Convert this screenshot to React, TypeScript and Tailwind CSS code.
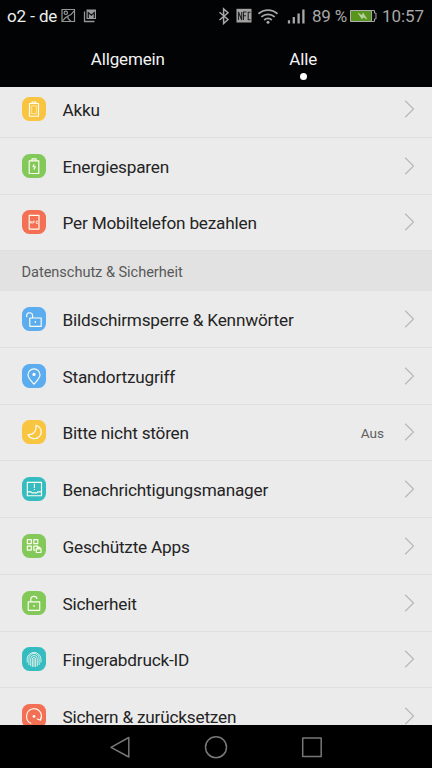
import type { ReactNode } from 'react';

type Item = { label: string; color: string; icon: ReactNode; value?: string };

const general: Item[] = [
  {
    label: 'Akku',
    color: 'bg-[#f9c440]',
    icon: (
      <>
        <path d="M7.500 6.500h9v12.700h-9zM10 6.500V5h4v1.500" />
        <path d="M9.700 8.800h4.600v8H9.700z" strokeWidth=".6" />
      </>
    ),
  },
  {
    label: 'Energiesparen',
    color: 'bg-[#83c95a]',
    icon: (
      <>
        <path d="M7.200 6.800h9.600v12.700H7.200zM10 6.800V4.900h4v1.900" />
        <path d="M12.200 10.300l-1.200 2.400h2.400l-1.500 2.900" />
      </>
    ),
  },
  {
    label: 'Per Mobiltelefon bezahlen',
    color: 'bg-[#f37055]',
    icon: (
      <>
        <path d="M7.200 5.300h9.800v13.800H7.200z" />
        <path d="M8.300 13.400v-2.200l1.600 2.200v-2.200M11.200 13.400v-2.200h1.500M11.200 12.300h1.200M16 11.200h-1.700v2.200H16" strokeWidth=".8" />
      </>
    ),
  },
];

const security: Item[] = [
  {
    label: 'Bildschirmsperre & Kennwörter',
    color: 'bg-[#5badf0]',
    icon: (
      <>
        <path d="M7.800 11h11.400v8.300H7.800zM4.700 10.100C4.200 7.400 5.500 5.700 7.600 5.700c1.700 0 3 1.300 3 3V11" />
        <path d="M13.300 14v2" />
      </>
    ),
  },
  {
    label: 'Standortzugriff',
    color: 'bg-[#5badf0]',
    icon: (
      <>
        <path d="M12 20.200c-2.500-3-6-6.400-6-9.300a6 6 0 0 1 12 0c0 2.900-3.500 6.300-6 9.300z" />
        <circle cx="12" cy="10.400" r="1.600" fill="#fff" stroke="none" />
      </>
    ),
  },
  {
    label: 'Bitte nicht stören',
    color: 'bg-[#f9c440]',
    icon: <path d="M13.800 5.200c5.600 1.600 7 7.500 3.700 11.200-3.500 3.800-9.500 2.800-11.600-1.900 5.200.8 9.100-3.600 7.900-9.300z" />,
    value: 'Aus',
  },
  {
    label: 'Benachrichtigungsmanager',
    color: 'bg-[#35bcc0]',
    icon: (
      <>
        <path d="M5.300 5.300h14.200v13.400H5.300zM5.300 14.900h3.800l.9 .9h4.800l.9-.9h3.800" />
        <path d="M12.400 6.800v4.200M12.400 12v1" />
      </>
    ),
  },
  {
    label: 'Geschützte Apps',
    color: 'bg-[#83c95a]',
    icon: (
      <>
        <path d="M5.300 5.600h4v4h-4zM11.800 5.600h4v4h-4zM5.300 12.100h4v4h-4zM13.500 16.100h-1.700v-4h4v1" />
        <path d="M14.300 14.900h4.700v3.600h-4.700zM15.300 14.900v-1.500h2.700v1.500" />
      </>
    ),
  },
  {
    label: 'Sicherheit',
    color: 'bg-[#83c95a]',
    icon: (
      <>
        <path d="M6.200 10.900h11.500v8.400H6.200zM8.800 10.900V8.400c0-1.900 1.300-3 3.100-3s2.900 1 3.100 2.600" />
        <path d="M12 13.900v2" />
      </>
    ),
  },
  {
    label: 'Fingerabdruck-ID',
    color: 'bg-[#35bcc0]',
    icon: (
      <g strokeWidth=".8">
        <path d="M5.200 15.500v-4a6.900 6.900 0 0 1 13.700 0v4.100" />
        <path d="M6.900 18v-6.400a5.100 5.100 0 0 1 10.200 0V18" />
        <path d="M8.700 19.200v-7.400a3.300 3.300 0 0 1 6.600 0v7.400" />
        <path d="M10.400 19.900v-7.800a1.600 1.600 0 0 1 3.200 0v7.800M12 11.800v8.100" />
      </g>
    ),
  },
  {
    label: 'Sichern & zurücksetzen',
    color: 'bg-[#f37055]',
    icon: (
      <>
        <path d="M9.300 19.500C2.800 17.200 3 7 10 5c6.500-1.800 11.500 4.700 8.300 10.500M19.700 12.500l-1.200 3.700-3.700-1.400" />
        <circle cx="12" cy="12.400" r="1.400" fill="#fff" stroke="none" />
      </>
    ),
  },
];

function Row({ label, color, icon, value }: Item) {
  return (
    <div className="flex h-[56.75px] items-center border-b border-[#dfdfdf] pl-[21.500px] pr-[17px]">
      <div className={`size-6 shrink-0 rounded-[7.500px] ${color}`}>
        <svg viewBox="0 0 24 24" className="size-6 fill-none stroke-[#fffdf2]" strokeWidth="1.150" strokeLinejoin="round">
          {icon}
        </svg>
      </div>
      <span className="ml-[17px] flex-1 whitespace-nowrap pt-[4px] text-[17.200px] tracking-[-0.2px] text-[#242424]">{label}</span>
      {value && <span className="mr-[20px] pt-px text-[13.600px] text-[#606060]">{value}</span>}
      <svg viewBox="0 0 11 18" className="h-[18px] w-[11px] fill-none stroke-[#b8b8b8]" strokeWidth="1.200">
        <path d="M1.200 .8L9.500 9 1.200 17.200" />
      </svg>
    </div>
  );
}

function StatusBar() {
  return (
    <div className="flex h-[31px] items-center pl-[7px] pr-[7px] text-[#a8a8a8]">
      <span className="w-[54px] whitespace-nowrap pt-[3px] text-[17px] tracking-[-0.1px] text-[#efefef]">o2 - de</span>
      <svg className="h-[15px] w-[36px] fill-none stroke-[#969696]" viewBox="0 0 36 15" strokeWidth="1.200">
        <path d="M1 1.500h12.500v12H1zM2 12.500c2-3 3.500-3.500 5-4.500 3-1 4.500-2.500 6-5M7 8.500v2l3 3" />
        <circle cx="4.800" cy="4.800" r="1.700" />
        <path d="M23.500 3.500v10h10" strokeWidth="1.300" />
        <path d="M25.500 1.500h9.500v9.500h-9.500z" fill="#9c9c9c" stroke="none" />
        <path d="M27.300 10V4.500l3 2.700 3-2.700V10" stroke="#151515" />
      </svg>
      <div className="flex-1" />
      <svg className="h-[18px] w-[91px] fill-none stroke-[#a8a8a8]" viewBox="0 0 91 18" strokeWidth="1.500">
        <path d="M1.500 5.200l8.500 7.300-4.400 4V2l4.400 3.800-8.500 7.200" />
        <path d="M18.500 1.800h15v13.700h-15z" fill="#a2a2a2" stroke="none" />
        <path d="M20.500 13V5l3.200 8V5M25.500 13V5h3M25.500 8.800h2.500M32.500 5.300h-2.300v7.400h2.300" stroke="#222" strokeWidth="1.100" />
        <path d="M40.500 6.800c5.500-4.800 13.500-4.800 19 0M43.300 9.900c4-3.400 9.400-3.400 13.400 0M46.200 13c2.400-2 5.200-2 7.600 0" strokeWidth="1.800" />
        <circle cx="50" cy="15.300" r="1.500" fill="#a8a8a8" stroke="none" />
        <path d="M71 16.500v-3.200M75.800 16.500V10M80.600 16.500V6.500M85.400 16.500v-14" strokeWidth="2.300" />
      </svg>
      <span className="ml-[3px] w-[37px] whitespace-nowrap pt-[3px] text-[17px] tracking-[-0.2px]">89 %</span>
      <svg className="h-[14px] w-[28px]" viewBox="0 0 28 14">
        <path d="M1.500 1.500h21v11h-21z" fill="#58951c" stroke="#b0b0b0" />
        <path d="M22.500 1.500h3v2.500H27v6h-1.500v2.500h-3z" fill="#111" stroke="#a4a4a4" />
        <path d="M9 4l4 2.500 1-2.500 4 6-4-2-1 2z" fill="#bdd2a4" stroke="#bdd2a4" strokeWidth=".5" />
      </svg>
      <span className="ml-[5px] w-[43px] whitespace-nowrap pt-[3px] text-[17px] tracking-[-0.1px]">10:57</span>
    </div>
  );
}

export default function App() {
  return (
    <div className="flex h-[768px] w-[432px] flex-col overflow-hidden bg-[#ebebeb] font-['Roboto',sans-serif]">
      <header className="h-[87px] shrink-0 bg-[#020304]">
        <StatusBar />
        <nav className="flex h-[56px] pl-[40px] pr-[41px] pt-[16px] text-[17px] leading-[24px] tracking-[-0.15px] text-[#f2f2f2]">
          <span className="flex-1 text-center">Allgemein</span>
          <div className="flex flex-1 flex-col items-center">
            <span>Alle</span>
            <span className="mt-[2px] size-[7px] rounded-full bg-white" />
          </div>
        </nav>
      </header>
      <main className="min-h-0 flex-1 overflow-hidden">
        <div className="-mt-[6px]">
          {general.map((item) => (
            <Row key={item.label} {...item} />
          ))}
          <h2 className="flex h-[39.750px] items-center bg-[#e2e2e2] pl-[21.500px] pt-[4px] text-[14.600px] tracking-[-0.05px] text-[#595959]">
            Datenschutz &amp; Sicherheit
          </h2>
          {security.map((item) => (
            <Row key={item.label} {...item} />
          ))}
        </div>
      </main>
      <footer className="flex h-[43px] shrink-0 items-center justify-center bg-black">
        <svg viewBox="0 0 212 24" className="h-6 w-[212px] fill-none stroke-[#777]" strokeWidth="1.500" strokeLinejoin="round">
          <path d="M18.800 2.500v19.500L1 12.300z" />
          <circle cx="106" cy="12.200" r="10.500" />
          <path d="M192.700 3h18.500v18.500h-18.500z" />
        </svg>
      </footer>
    </div>
  );
}
